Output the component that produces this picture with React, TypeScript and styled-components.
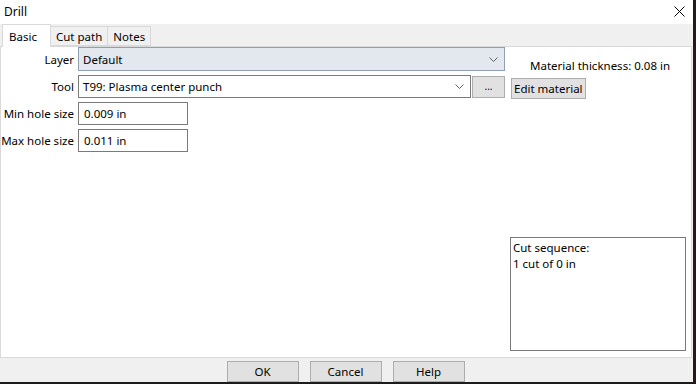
import React from "react";
import styled, { createGlobalStyle } from "styled-components";

const GlobalStyle = createGlobalStyle`
  html, body {
    margin: 0;
    padding: 0;
    background: #f0f0f0;
  }
  body {
    font-family: "Noto Sans", "Open Sans", sans-serif;
    font-size: 11.5px;
    color: #000;
  }
`;

function Chevron() {
  return (
    <svg width="9" height="5" viewBox="0 0 9 5">
      <path d="M0.5 0.5 L4.5 4.5 L8.5 0.5" fill="none" stroke="#606060" strokeWidth="1" />
    </svg>
  );
}

function App() {
  return (
    <Window>
      <GlobalStyle />
      <TitleBar>
        <Title>Drill</Title>
        <CloseBox>
          <svg width="11" height="11" viewBox="0 0 11 11">
            <path d="M0.5 0.5 L10.5 10.5 M10.5 0.5 L0.5 10.5" stroke="#000" strokeWidth="1" />
          </svg>
        </CloseBox>
      </TitleBar>

      <TabStrip>
        <Tab active>Basic</Tab>
        <Tab>Cut path</Tab>
        <Tab>Notes</Tab>
      </TabStrip>

      <Panel>
        <Form>
          <Label>Layer</Label>
          <Combo variant="list" $w={427}>
            <span>Default</span>
            <Chevron />
          </Combo>

          <Label>Tool</Label>
          <ToolRow>
            <Combo $w={393}>
              <span>T99: Plasma center punch</span>
              <Chevron />
            </Combo>
            <DotsButton>...</DotsButton>
          </ToolRow>

          <Label>Min hole size</Label>
          <TextBox>0.009 in</TextBox>

          <Label>Max hole size</Label>
          <TextBox>0.011 in</TextBox>
        </Form>

        <Side>
          <Thickness>Material thickness: 0.08 in</Thickness>
          <EditButton>Edit material</EditButton>
          <CutBox>
            <div>Cut sequence:</div>
            <div>1 cut of 0 in</div>
          </CutBox>
        </Side>
      </Panel>

      <Footer>
        <DialogButton>OK</DialogButton>
        <DialogButton>Cancel</DialogButton>
        <DialogButton>Help</DialogButton>
      </Footer>
    </Window>
  );
}

const Window = styled.div`
  width: 696px;
  height: 384px;
  box-sizing: border-box;
  border-right: 3px solid #231a1a;
  border-bottom: 2px solid #1c1c1c;
  background: #f0f0f0;
  display: flex;
  flex-direction: column;
  overflow: hidden;
`;

const TitleBar = styled.div`
  height: 24px;
  background: #fff;
  display: flex;
  align-items: center;
  justify-content: space-between;
  padding-left: 4px;
  padding-right: 8px;
  flex-shrink: 0;
`;

const Title = styled.div`
  font-size: 12px;
  margin-top: -2px;
`;

const CloseBox = styled.div`
  display: flex;
  align-items: center;
  margin-top: -2px;
`;

const TabStrip = styled.div`
  height: 22px;
  display: flex;
  align-items: flex-end;
  padding-left: 2px;
  flex-shrink: 0;
  position: relative;
  z-index: 1;
`;

const Tab = styled.div<{ active?: boolean }>`
  box-sizing: border-box;
  height: ${(p) => (p.active ? "23px" : "20px")};
  margin-bottom: ${(p) => (p.active ? "-1px" : "0")};
  padding: ${(p) => (p.active ? "1px 6px 0 6px" : "0 5px")};
  border: 1px solid #d9d9d9;
  border-bottom: ${(p) => (p.active ? "none" : "1px solid #d9d9d9")};
  border-left: ${(p) => (p.active ? "1px solid #d9d9d9" : "none")};
  background: ${(p) => (p.active ? "#fff" : "#f0f0f0")};
  display: flex;
  align-items: center;
  min-width: ${(p) => (p.active ? "49px" : "auto")};
  &:first-child {
    border-left: 1px solid #d9d9d9;
  }
`;

const Panel = styled.div`
  height: 312px;
  box-sizing: border-box;
  width: 692px;
  background: #fff;
  border: 1px solid #d9d9d9;
  display: flex;
  flex-shrink: 0;
`;

const Form = styled.div`
  display: grid;
  grid-template-columns: 73px auto;
  grid-template-rows: 24px 23px 23px 23px;
  column-gap: 4px;
  row-gap: 4px;
  align-content: start;
  align-items: center;
  width: 504px;
`;

const Label = styled.div`
  text-align: right;
  white-space: nowrap;
`;

const Combo = styled.div<{ variant?: "list"; $w: number }>`
  box-sizing: border-box;
  width: ${(p) => p.$w}px;
  height: ${(p) => (p.variant === "list" ? "24px" : "23px")};
  border: 1px solid ${(p) => (p.variant === "list" ? "#8fa0b4" : "#7a7a7a")};
  background: ${(p) => (p.variant === "list" ? "#e3e8ef" : "#fff")};
  display: flex;
  align-items: center;
  justify-content: space-between;
  padding: 0 6px 0 4px;
`;

const ToolRow = styled.div`
  display: flex;
  gap: 1px;
  align-items: center;
`;

const DotsButton = styled.div`
  box-sizing: border-box;
  width: 33px;
  height: 22px;
  background: #e1e1e1;
  border: 1px solid #adadad;
  display: flex;
  align-items: center;
  justify-content: center;
  font-size: 10px;
  padding-bottom: 2px;
`;

const TextBox = styled.div`
  box-sizing: border-box;
  width: 110px;
  height: 23px;
  border: 1px solid #7a7a7a;
  display: flex;
  align-items: center;
  padding-left: 5px;
`;

const Side = styled.div`
  display: flex;
  flex-direction: column;
  align-items: flex-start;
  padding-left: 6px;
  padding-bottom: 6px;
  flex: 1;
`;

const Thickness = styled.div`
  margin-top: 11px;
  margin-left: 19px;
  white-space: nowrap;
`;

const EditButton = styled.div`
  box-sizing: border-box;
  margin-top: 5px;
  height: 21px;
  padding: 0 2px;
  background: #e1e1e1;
  border: 1px solid #adadad;
  display: flex;
  align-items: center;
  white-space: nowrap;
`;

const CutBox = styled.div`
  margin-top: auto;
  margin-left: -1px;
  box-sizing: border-box;
  width: 176px;
  height: 114px;
  border: 1px solid #7a7a7a;
  padding: 2px 2px;
  line-height: 16px;
`;

const Footer = styled.div`
  flex: 1;
  display: flex;
  justify-content: center;
  align-items: flex-start;
  gap: 11px;
  padding-top: 3px;
  padding-right: 2px;
`;

const DialogButton = styled.div`
  box-sizing: border-box;
  width: 72px;
  height: 21px;
  background: #e1e1e1;
  border: 1px solid #adadad;
  display: flex;
  align-items: center;
  justify-content: center;
`;

export default App;
